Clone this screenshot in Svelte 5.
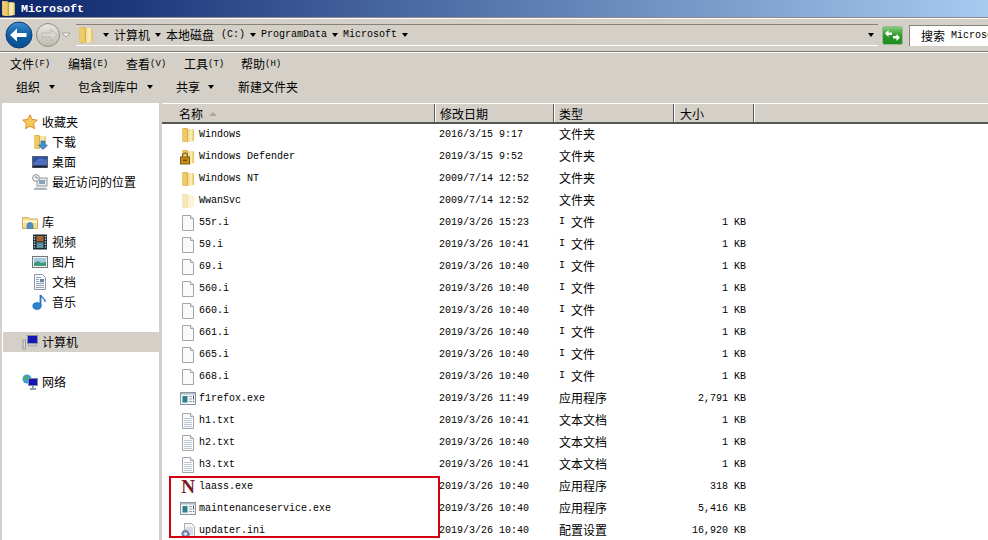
<script>
  const rows = [
    ['folder', 'Windows', '2016/3/15 9:17', '文件夹', ''],
    ['lockfolder', 'Windows Defender', '2019/3/15 9:52', '文件夹', ''],
    ['folder', 'Windows NT', '2009/7/14 12:52', '文件夹', ''],
    ['lightfolder', 'WwanSvc', '2009/7/14 12:52', '文件夹', ''],
    ['blank', '55r.i', '2019/3/26 15:23', 'I 文件', '1 KB'],
    ['blank', '59.i', '2019/3/26 10:41', 'I 文件', '1 KB'],
    ['blank', '69.i', '2019/3/26 10:40', 'I 文件', '1 KB'],
    ['blank', '560.i', '2019/3/26 10:40', 'I 文件', '1 KB'],
    ['blank', '660.i', '2019/3/26 10:40', 'I 文件', '1 KB'],
    ['blank', '661.i', '2019/3/26 10:40', 'I 文件', '1 KB'],
    ['blank', '665.i', '2019/3/26 10:40', 'I 文件', '1 KB'],
    ['blank', '668.i', '2019/3/26 10:40', 'I 文件', '1 KB'],
    ['exe', 'f1refox.exe', '2019/3/26 11:49', '应用程序', '2,791 KB'],
    ['txt', 'h1.txt', '2019/3/26 10:41', '文本文档', '1 KB'],
    ['txt', 'h2.txt', '2019/3/26 10:40', '文本文档', '1 KB'],
    ['txt', 'h3.txt', '2019/3/26 10:41', '文本文档', '1 KB'],
    ['nicon', 'laass.exe', '2019/3/26 10:40', '应用程序', '318 KB'],
    ['exe', 'maintenanceservice.exe', '2019/3/26 10:40', '应用程序', '5,416 KB'],
    ['ini', 'updater.ini', '2019/3/26 10:40', '配置设置', '16,920 KB']
  ]

  const menus = [['文件', '(F)', 58], ['编辑', '(E)', 58], ['查看', '(V)', 58], ['工具', '(T)', 57], ['帮助', '(H)', 50]]

  const nav = [
    { id: 'star', label: '收藏夹', head: true },
    { id: 'dl', label: '下载' },
    { id: 'desk', label: '桌面' },
    { id: 'recent', label: '最近访问的位置', end: true },
    { id: 'lib', label: '库', head: true },
    { id: 'video', label: '视频' },
    { id: 'pic', label: '图片' },
    { id: 'doc', label: '文档' },
    { id: 'music', label: '音乐', end: true },
    { id: 'pc', label: '计算机', head: true, end: true, active: true },
    { id: 'net', label: '网络', head: true }
  ]
</script>

{#snippet ico(id, size = 16)}
  <svg class="ico" width={size} height={size} viewBox="0 0 16 16"><use href="#{id}" /></svg>
{/snippet}

<svg class="defs" width="0" height="0">
  <defs>
    <linearGradient id="fy" x1="0" x2="1" y1="0" y2="0">
      <stop offset="0" stop-color="#f3dc8c" /><stop offset=".55" stop-color="#fbeeb8" /><stop offset="1" stop-color="#e3bb52" />
    </linearGradient>
    <linearGradient id="blueb" x1="0" x2="0" y1="0" y2="1">
      <stop offset="0" stop-color="#3f8fd0" /><stop offset=".5" stop-color="#0f5ea8" /><stop offset="1" stop-color="#0a4f8f" />
    </linearGradient>
    <linearGradient id="greyb" x1="0" x2="0" y1="0" y2="1">
      <stop offset="0" stop-color="#e8e6e0" /><stop offset="1" stop-color="#bdbab2" />
    </linearGradient>
    <linearGradient id="greenb" x1="0" x2="0" y1="0" y2="1">
      <stop offset="0" stop-color="#8bcf80" /><stop offset=".5" stop-color="#2e9a2c" /><stop offset="1" stop-color="#1c8a1e" />
    </linearGradient>
    <symbol id="folder" viewBox="0 0 16 16">
      <path d="M2 1h5l1 1v13H4l-2-1z" fill="#d9ae45" />
      <path d="M8 2h5l1 1v11l-6 1z" fill="url(#fy)" />
      <path d="M2 1l5 1.500V15l-5-1z" fill="#eccb6c" />
    </symbol>
    <symbol id="lightfolder" viewBox="0 0 16 16">
      <path d="M2 1h5l1 1v13H4l-2-1z" fill="#f0dfa8" />
      <path d="M8 2h5l1 1v11l-6 1z" fill="#faf3d6" />
      <path d="M2 1l5 1.500V15l-5-1z" fill="#f5e8bd" />
    </symbol>
    <symbol id="lockfolder" viewBox="0 0 16 16">
      <use href="#folder" width="16" height="16" />
      <path d="M2.500 8V6.500a2.500 2.500 0 0 1 5 0V8" fill="none" stroke="#7a5a10" stroke-width="1.200" />
      <rect x="0.500" y="8" width="9" height="7" fill="#c98f14" stroke="#7a5a10" />
      <rect x="3" y="10.500" width="4" height="1.500" fill="#6d4c0c" />
    </symbol>
    <symbol id="blank" viewBox="0 0 16 16">
      <path d="M2.500 .5h8l3 3v12h-11z" fill="#fafafa" stroke="#a3a6ab" />
      <path d="M10.500 .5v3h3" fill="#e4e6ea" stroke="#a3a6ab" />
    </symbol>
    <symbol id="txt" viewBox="0 0 16 16">
      <use href="#blank" width="16" height="16" />
      <path d="M4 5.500h8M4 7.500h8M4 9.500h8M4 11.500h8M4 13.500h8" stroke="#bcc8d4" />
    </symbol>
    <symbol id="exe" viewBox="0 0 16 16">
      <rect x=".5" y="1.500" width="15" height="12" fill="#f4f5f6" stroke="#8a949d" />
      <rect x="1" y="2" width="14" height="1.500" fill="#aebcc7" />
      <rect x="2.500" y="5" width="5" height="6.500" fill="#2f7f8e" />
      <path d="M9 5.500h3M9 8h3M9 10.500h3" stroke="#9aa6b0" />
      <path d="M13.500 4.500v4M13.500 10v1" stroke="#45586a" />
    </symbol>
    <symbol id="nicon" viewBox="0 0 16 16">
      <text x="8" y="13.500" text-anchor="middle" font-family="Liberation Serif, serif" font-weight="bold" font-size="19" fill="#7c1526">N</text>
    </symbol>
    <symbol id="ini" viewBox="0 0 16 16">
      <path d="M4.500 .5h7l3 3v11h-10z" fill="#f5f6f8" stroke="#a9acb2" />
      <path d="M6 5h7M6 7h7M9 9h4M9 11h4" stroke="#b9c3cd" />
      <circle cx="5.500" cy="11" r="3.400" fill="#8296bc" stroke="#55688f" stroke-width="1.500" stroke-dasharray="1.600 .9" />
      <circle cx="5.500" cy="11" r="1.400" fill="#f0f2f6" />
    </symbol>
    <symbol id="star" viewBox="0 0 16 16">
      <path d="M8 .8l2.200 4.700 5.100.6-3.800 3.500 1 5.100L8 12.200l-4.500 2.500 1-5.100L.7 6.100l5.100-.6z" fill="#f8c95a" stroke="#d98a2a" />
    </symbol>
    <symbol id="dl" viewBox="0 0 16 16">
      <use href="#folder" width="16" height="16" />
      <path d="M9 7h4v4h2.500L11 15.500 6.500 11H9z" fill="#3d8fd8" stroke="#1f5f9e" stroke-width=".6" />
    </symbol>
    <symbol id="desk" viewBox="0 0 16 16">
      <rect x=".5" y="2.500" width="15" height="11" fill="#2d4fa8" stroke="#5b6570" />
      <path d="M1 9l7-5 7 2v7H1z" fill="#6c8bd0" opacity=".55" />
      <rect x="1" y="11.500" width="14" height="2" fill="#1a2230" />
    </symbol>
    <symbol id="recent" viewBox="0 0 16 16">
      <rect x="5" y="4" width="10" height="8" fill="#e9ebee" stroke="#8f959c" />
      <rect x="7" y="6" width="6" height="4" fill="#8ba2b6" />
      <circle cx="4" cy="4" r="3.400" fill="#f0f1f2" stroke="#8f959c" />
      <path d="M4 2v2h2" fill="none" stroke="#6c7178" stroke-width=".8" />
      <path d="M3 14h11l1 1.500H2z" fill="#b9bcc0" stroke="#8f959c" stroke-width=".5" />
    </symbol>
    <symbol id="lib" viewBox="0 0 16 16">
      <path d="M.5 3.500h6l1 1.500h8v9.500H.5z" fill="#f2dc90" stroke="#d2ad5c" />
      <path d="M1 6h14v3H1z" fill="#fbf2c9" />
      <path d="M5 14.500v-3a3 3 0 0 1 6 0v3z" fill="#4e8fc8" stroke="#2f6ea5" stroke-width=".6" />
    </symbol>
    <symbol id="video" viewBox="0 0 16 16">
      <rect x="1" y=".5" width="14" height="15" fill="#1c2b33" />
      <rect x="4.500" y="2" width="7" height="5.500" fill="#a5622f" />
      <rect x="4.500" y="8.500" width="7" height="5.500" fill="#5b8fa3" />
      <path d="M2.500 2v12M13.500 2v12" stroke="#d7e0e3" stroke-width="1.400" stroke-dasharray="1.200 1.400" />
    </symbol>
    <symbol id="pic" viewBox="0 0 16 16">
      <rect x=".5" y="2.500" width="15" height="11" fill="#f0f1f2" stroke="#70767c" />
      <rect x="2" y="4" width="12" height="8" fill="#9ecbe0" />
      <path d="M2 12V9l4-2 3 2 5-1v4z" fill="#3f9a78" />
    </symbol>
    <symbol id="doc" viewBox="0 0 16 16">
      <path d="M2.500 .5h8l3 3v12h-11z" fill="#f6f7f9" stroke="#8f99a6" />
      <path d="M4 3.500h5M4 5.500h3M4 7.500h3M4 9.500h8M4 11.500h8M4 13.500h8" stroke="#95a3b4" />
      <rect x="8" y="5" width="4" height="3.200" fill="#5f86ad" />
    </symbol>
    <symbol id="music" viewBox="0 0 16 16">
      <path d="M8.500 1v11" stroke="#2a75c2" stroke-width="1.800" />
      <path d="M8.500 1c1 3 5 3 4.500 7" fill="none" stroke="#2a75c2" stroke-width="1.300" />
      <ellipse cx="5" cy="12" rx="4.200" ry="3.400" fill="#2a84d6" stroke="#1a5c9e" stroke-width=".6" />
    </symbol>
    <symbol id="pc" viewBox="0 0 16 16">
      <rect x="5.500" y="1.500" width="10" height="8" fill="#1616b8" stroke="#87909b" />
      <path d="M7 9.500h7l1 2.500H6z" fill="#c3c7cb" stroke="#8b9096" stroke-width=".5" />
      <rect x="1" y="6" width="2.500" height="9" fill="#d4d6d9" stroke="#7f858c" stroke-width=".7" />
    </symbol>
    <symbol id="net" viewBox="0 0 16 16">
      <circle cx="5" cy="5" r="4.500" fill="#3f9ed8" />
      <path d="M2 3l3-1 1 3-3 2z" fill="#4fae4c" />
      <rect x="6.500" y="4.500" width="9" height="7" fill="#1616b8" stroke="#7f8fa0" />
      <path d="M11 11.500v2.500M8 15h6" stroke="#6d7a88" stroke-width="1.400" />
    </symbol>
  </defs>
</svg>

<div class="win">
  <div class="title">
    <svg class="ico" width="17" height="17" viewBox="0 0 16 16"><use href="#folder" /></svg>
    <span>Microsoft</span>
  </div>

  <div class="navbar">
    <svg class="backfwd" width="72" height="30" viewBox="0 0 72 30">
      <circle cx="17" cy="15" r="13" fill="url(#blueb)" stroke="#0c3f78" />
      <path d="M8 15l7-6.500v4.500h9.500v4H15v4.500z" fill="#fff" />
      <circle cx="46" cy="15" r="11.500" fill="url(#greyb)" stroke="#8f8d86" />
      <path d="M55 15l-6-6v4h-9v4h9v4z" fill="#d8d6d0" stroke="#aaa8a0" stroke-width=".6" />
      <path d="M60 13h8l-4 4z" fill="#f4f3ef" stroke="#8f8d86" stroke-width=".7" />
    </svg>
    <div class="addr">
      <svg class="ico addrfolder" width="18" height="18" viewBox="0 0 16 16"><use href="#folder" /></svg>
      <i class="tri a1"></i>
      <span class="cjk seg">计算机</span>
      <i class="tri"></i>
      <span class="cjk seg s2">本地磁盘</span>
      <span class="lat drive">(C:)</span>
      <i class="tri"></i>
      <span class="lat seg">ProgramData</span>
      <i class="tri"></i>
      <span class="lat seg">Microsoft</span>
      <i class="tri"></i>
      <i class="tri drop"></i>
    </div>
    <svg class="refresh" width="21" height="19" viewBox="0 0 21 19">
      <rect x=".5" y=".5" width="20" height="18" rx="2" fill="url(#greenb)" stroke="#9fb79a" />
      <path d="M3 7.500l3.500-3.500v2.500h3.500v2.500H6.500v2zM18 11.500l-3.500 3.500v-2.500H11V10h3.500V8z" fill="#fff" />
    </svg>
    <div class="search"><span class="cjk">搜索</span><span class="lat find">Microsoft</span></div>
  </div>

  <div class="menubar">
    {#each menus as [zh, key, w]}
      <span class="menu" style="width: {w}px"><span class="cjk">{zh}</span><span class="lat hot">{key}</span></span>
    {/each}
  </div>

  <div class="toolbar">
    <span class="cjk tool">组织</span><i class="tri t1"></i>
    <span class="cjk tool t2">包含到库中</span><i class="tri t3"></i>
    <span class="cjk tool t4">共享</span><i class="tri t5"></i>
    <span class="cjk tool t6">新建文件夹</span>
  </div>

  <div class="main">
    <aside>
      {#each nav as item}
        <div class="navitem" class:head={item.head} class:end={item.end} class:active={item.active}>
          {@render ico(item.id)}
          <span class="cjk">{item.label}</span>
        </div>
      {/each}
    </aside>

    <section>
      <div class="hdr">
        <div class="hc c1"><span class="cjk">名称</span><i class="up"></i></div>
        <div class="hc c2"><span class="cjk">修改日期</span></div>
        <div class="hc c3"><span class="cjk">类型</span></div>
        <div class="hc c4"><span class="cjk">大小</span></div>
      </div>
      <div class="list">
        {#each rows as [icon, name, date, type, size]}
          <div class="row">
            <div class="c1 name">{@render ico(icon)}<span class="lat">{name}</span></div>
            <div class="c2 lat date">{date}</div>
            <div class="c3 type">
              {#if type.startsWith('I ')}<span class="lat ext">I</span><span class="cjk">文件</span>{:else}<span class="cjk">{type}</span>{/if}
            </div>
            <div class="c4 lat size">{size}</div>
          </div>
        {/each}
        <div class="mark"></div>
      </div>
    </section>
  </div>
</div>

<style>
  :global(body) { margin: 0; background: #d4d0c8; overflow: hidden; }
  .defs { position: absolute; }
  .win { width: 988px; height: 540px; overflow: hidden; background: #d4d0c8; color: #000; }
  .ico { display: block; flex: none; }
  .cjk { font: 12px/16px "Noto Sans CJK SC", sans-serif; }
  .lat { font: 10px/16px "Liberation Mono", monospace; white-space: pre; }
  i { display: block; flex: none; }

  .title {
    height: 17px; display: flex; align-items: center; gap: 4px;
    background: linear-gradient(90deg, #0a246a, #a6caf0);
    border-bottom: 1px solid #8a8a88;
  }
  .title span { font: bold 11.7px/17px "Liberation Mono", monospace; color: #fff; padding-top: 1px; }

  .navbar {
    height: 34px; display: flex; align-items: center; box-sizing: border-box;
    border-top: 1px solid #fff; border-bottom: 1px solid #7f7d78; padding-left: 2px;
  }
  .backfwd { display: block; flex: none; }
  .addr {
    width: 802px; height: 22px; margin-left: 2px; display: flex; align-items: center;
    border-top: 1px solid #85837a; border-bottom: 1px solid #fff; box-sizing: border-box;
  }
  .addrfolder { margin: 0 8px 0 1px; }
  .tri { width: 0; height: 0; border: 3.5px solid transparent; border-top: 4px solid #000; border-bottom: 0; }
  .seg { margin: 0 5px; }
  .s2 { margin-right: 0; }
  .drive { margin-left: 7px; margin-right: 5px; }
  .drop { margin-left: auto; margin-right: 4px; }
  .refresh { display: block; flex: none; margin-left: 4px; }
  .search {
    margin-left: 6px; flex: 1; height: 21px; background: #fff; display: flex; align-items: center;
    padding-left: 11px; border-top: 1px solid #85837a; border-left: 1px solid #85837a; box-sizing: border-box; white-space: nowrap; overflow: hidden;
  }
  .find { margin-left: 6px; }

  .menubar { height: 24px; display: flex; align-items: center; padding: 0 0 2px 10px; border-top: 1px solid #fff; box-sizing: border-box; }
  .menu { display: flex; align-items: center; flex: none; }
  .hot { font-size: 9px; }

  .toolbar { height: 27px; display: flex; align-items: center; padding: 0 0 6px 16px; box-sizing: border-box; }
  .t1 { margin-left: 9px; }
  .t2 { margin-left: 23px; }
  .t3 { margin-left: 9px; }
  .t4 { margin-left: 23px; }
  .t5 { margin-left: 8px; }
  .t6 { margin-left: 24px; }

  .main { display: flex; height: 437px; }
  aside { width: 157px; margin-left: 2px; background: #fff; padding-top: 9px; flex: none; }
  .navitem { height: 20px; display: flex; align-items: center; gap: 4px; padding-left: 30px; }
  .navitem.head { padding-left: 20px; }
  .navitem.end { margin-bottom: 20px; }
  .navitem.active { background: #d4d0c8; margin-left: 1px; padding-left: 19px; }

  section { margin-left: 3px; flex: 1; display: flex; flex-direction: column; min-width: 0; }
  .hdr { height: 18px; flex: none; display: flex; border-top: 1px solid #fff; border-bottom: 2px solid #555; background: #d4d0c8; overflow: hidden; }
  .hc { display: flex; align-items: center; box-sizing: border-box; padding-top: 2px; border-right: 1px solid #5f5d58; box-shadow: 1px 0 0 #fff; }
  .hdr .c1 { padding-left: 17px; gap: 6px; }
  .hdr .c2 { padding-left: 5px; }
  .hdr .c3 { padding-left: 5px; }
  .hdr .c4 { padding-left: 6px; }
  .c1 { width: 273px; flex: none; }
  .c2 { width: 119px; flex: none; }
  .c3 { width: 120px; flex: none; }
  .c4 { width: 80px; flex: none; }
  .up { width: 0; height: 0; border: 4px solid transparent; border-bottom: 4px solid #a9a69d; border-top: 0; }

  .list { position: relative; flex: none; background: #fff; }
  .row { height: 22px; display: flex; align-items: center; }
  .name { display: flex; align-items: center; gap: 3px; padding-left: 18px; box-sizing: border-box; }
  .date { padding-left: 4px; box-sizing: border-box; }
  .type { padding: 0 0 2px 5px; box-sizing: border-box; display: flex; align-items: center; }
  .ext { margin-right: 6px; }
  .size { text-align: right; padding-right: 8px; box-sizing: border-box; }
  .mark { position: absolute; left: 7px; top: 352px; width: 271px; height: 62px; box-sizing: border-box; border: 2px solid #d4000f; pointer-events: none; }
</style>
